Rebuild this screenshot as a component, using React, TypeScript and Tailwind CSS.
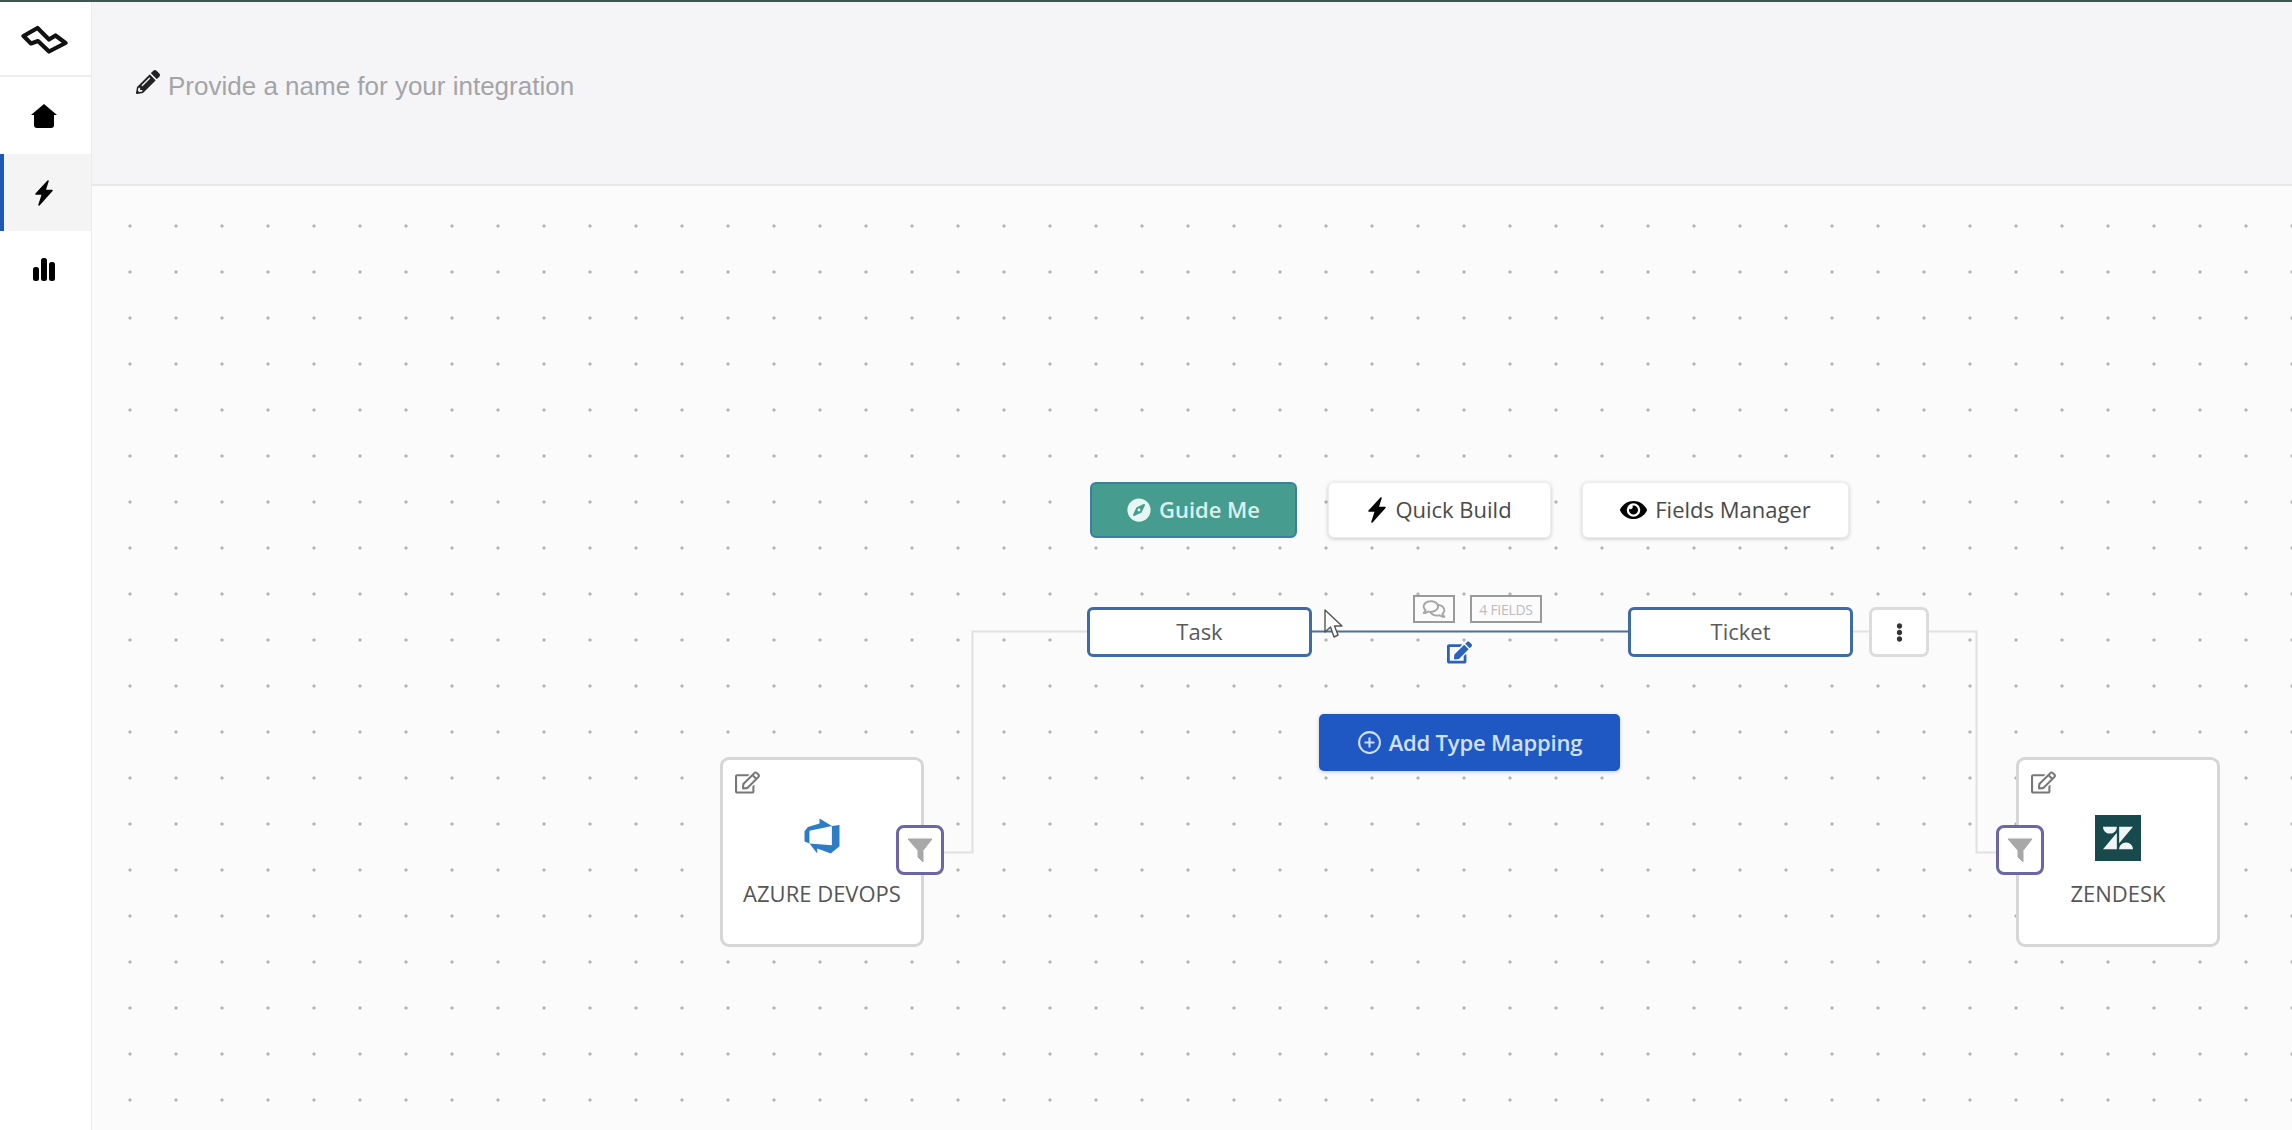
import type { ReactNode } from 'react';
import { FaCompass, FaEdit, FaEllipsisV, FaEye, FaPencilAlt, FaRegComments, FaRegEdit } from 'react-icons/fa';
import { FiPlusCircle } from 'react-icons/fi';
import { SiZendesk } from 'react-icons/si';
import { VscAzureDevops } from 'react-icons/vsc';

const UI_FONT = "font-['Open_Sans',sans-serif]";

const Logo = () => (
  <svg width="48" height="30" viewBox="0 0 48 30" fill="none" stroke="#111" strokeWidth="4.2" strokeLinejoin="round">
    <path d="M2.5 11 L16.5 3 L28 14.5 L34.5 10.5 L44.5 18 L28 26.5 L17 16 L10 18.5 Z" />
  </svg>
);

const HomeIcon = () => (
  <svg width="26" height="24" viewBox="0 0 26 24" fill="#000">
    <path d="M13 0 L26 11 L23 11 L23 21 Q23 24 20 24 L6 24 Q3 24 3 21 L3 11 L0 11 Z" />
  </svg>
);

const BoltIcon = ({ className }: { className: string }) => (
  <svg className={className} viewBox="0 0 20 26" fill="#000" stroke="#000" strokeWidth="1.5" strokeLinejoin="round">
    <path d="M14 1 L2 14 L8.5 14 L5 25 L18 10.5 L11 10.5 Z" />
  </svg>
);

const BarsIcon = () => (
  <svg width="22" height="23" viewBox="0 0 22 23" fill="#000">
    <rect x="0" y="9" width="6" height="14" rx="2.5" />
    <rect x="8" y="0" width="6" height="23" rx="2.5" />
    <rect x="16" y="4" width="6" height="19" rx="2.5" />
  </svg>
);

const FunnelIcon = () => (
  <svg width="26" height="26" viewBox="0 0 26 26" fill="#a8a8a8" stroke="#a8a8a8" strokeLinejoin="round">
    <path d="M1 2 L25 2 L16 13.5 L16 25 L11 20 L11 13.5 Z" />
  </svg>
);

const Cursor = () => (
  <svg width="20" height="31" viewBox="0 0 20 31" fill="#fff" stroke="#555" strokeWidth="1.4" strokeLinejoin="round">
    <path d="M1 1 L1 23 L6.5 18 L10 28 L14 26 L10.5 17 L18 17 Z" />
  </svg>
);

const navItems = [
  { key: 'home', icon: <HomeIcon />, active: false },
  { key: 'flows', icon: <BoltIcon className="h-[26px] w-[20px]" />, active: true },
  { key: 'reports', icon: <BarsIcon />, active: false },
];

const Sidebar = () => (
  <aside className="flex w-[92px] shrink-0 flex-col border-r border-[#ececee] bg-white">
    <div className="flex h-[75px] items-center justify-center border-b-2 border-[#ececec] pr-[2px] pt-[2px]">
      <Logo />
    </div>
    {navItems.map((item) => (
      <div
        key={item.key}
        className={`flex h-[77px] items-center justify-center pr-[4px] ${
          item.active ? 'border-l-[4px] border-[#1f57b8] bg-[#f4f4f5] pr-[8px]' : ''
        }`}
      >
        {item.icon}
      </div>
    ))}
  </aside>
);

const ActionButton = ({ className, children }: { className: string; children: ReactNode }) => (
  <button className={`absolute top-[296px] flex h-[56px] items-center justify-center gap-[8px] rounded-[6px] pb-[1px] text-[22px] ${className}`}>
    {children}
  </button>
);

const TypeBox = ({ label, className }: { label: string; className: string }) => (
  <div className={`absolute top-[421px] flex h-[50px] items-center justify-center rounded-[6px] border-[3px] border-[#3f6ba6] bg-white pb-[1px] text-[22px] text-[#5a5a5a] ${className}`}>
    {label}
  </div>
);

const FilterButton = ({ className }: { className: string }) => (
  <div className={`absolute top-[639px] flex h-[50px] w-[48px] items-center justify-center rounded-[8px] border-[3px] border-[#6c66a8] bg-white ${className}`}>
    <FunnelIcon />
  </div>
);

const SystemCard = ({ name, logo, className }: { name: string; logo: ReactNode; className: string }) => (
  <div className={`absolute top-[571px] h-[190px] w-[204px] rounded-[9px] border-[3px] border-[#d6d6d6] bg-white ${className}`}>
    <FaRegEdit className="absolute left-[12px] top-[10px] h-[25px] w-[25px] text-[#777]" />
    <div className="flex h-[101px] items-end justify-center">{logo}</div>
    <div className="mt-[18px] text-center text-[22px] leading-[28px] text-[#555]">{name}</div>
  </div>
);

const Canvas = () => (
  <div className={`relative flex-1 bg-[#fbfbfc] bg-[radial-gradient(circle,#b4b4b4_1.3px,transparent_1.9px)] bg-[size:46px_46px] bg-[position:15px_17px] ${UI_FONT}`}>
    <svg className="absolute inset-0 h-full w-full" fill="none">
      <path d="M995 445.5 H880.5 V666.5 H852" stroke="#e1e1e1" strokeWidth="2" />
      <path d="M1761 445.5 H1777 M1837 445.5 H1884.5 V666.5 H1904" stroke="#e1e1e1" strokeWidth="2" />
      <path d="M1220 445.5 H1536" stroke="#4f7098" strokeWidth="2" />
    </svg>

    <ActionButton className="left-[998px] w-[207px] border-2 border-[#3a7fa0] bg-[#469c8e] font-semibold text-[#d8f1ec]">
      <FaCompass className="h-[24px] w-[24px] text-[#e6f6f3]" />
      Guide Me
    </ActionButton>
    <ActionButton className="left-[1236px] w-[223px] border border-[#ededed] bg-white font-medium text-[#4a4a4a] shadow-[0_1px_4px_rgba(0,0,0,0.2)]">
      <BoltIcon className="h-[26px] w-[20px]" />
      Quick Build
    </ActionButton>
    <ActionButton className="left-[1490px] w-[267px] border border-[#ededed] bg-white font-medium text-[#4a4a4a] shadow-[0_1px_4px_rgba(0,0,0,0.2)]">
      <FaEye className="h-[24px] w-[27px] text-black" />
      Fields Manager
    </ActionButton>

    <TypeBox label="Task" className="left-[995px] w-[225px]" />
    <TypeBox label="Ticket" className="left-[1536px] w-[225px]" />
    <div className="absolute left-[1777px] top-[421px] flex h-[50px] w-[60px] items-center justify-center rounded-[7px] border-[3px] border-[#dcdcdc] bg-white">
      <FaEllipsisV className="h-[19px] w-[19px] text-[#333]" />
    </div>

    <div className="absolute left-[1321px] top-[409px] flex h-[28px] w-[42px] items-center justify-center border-2 border-[#9a9a9a] bg-[#fbfbfc]">
      <FaRegComments className="h-[20px] w-[24px] text-[#a5a5a5]" />
    </div>
    <div className="absolute left-[1378px] top-[409px] flex h-[28px] w-[72px] items-center justify-center border-2 border-[#9a9a9a] bg-[#fbfbfc] text-[14px] tracking-[-0.3px] text-[#bcbcbc]">
      4 FIELDS
    </div>
    <FaEdit className="absolute left-[1355px] top-[454px] h-[25px] w-[25px] text-[#2b62bd]" />

    <div className="absolute left-[1232px] top-[423px]">
      <Cursor />
    </div>

    <button className="absolute left-[1227px] top-[528px] flex h-[57px] w-[301px] items-center justify-center gap-[7px] rounded-[5px] bg-[#1f57c3] text-[22px] font-semibold tracking-[-0.2px] text-[#cfe0f8] shadow-[0_1px_4px_rgba(0,0,0,0.2)]">
      <FiPlusCircle className="h-[25px] w-[25px]" />
      Add Type Mapping
    </button>

    <SystemCard
      name="AZURE DEVOPS"
      className="left-[628px]"
      logo={<VscAzureDevops className="mb-[5px] h-[40px] w-[40px] text-[#2f7cc6]" />}
    />
    <FilterButton className="left-[804px]" />

    <SystemCard
      name="ZENDESK"
      className="left-[1924px]"
      logo={
        <div className="flex h-[46px] w-[46px] items-center justify-center bg-[#17494d]">
          <SiZendesk className="h-[30px] w-[30px] text-[#eef5f4]" />
        </div>
      }
    />
    <FilterButton className="left-[1904px]" />
  </div>
);

export default function App() {
  return (
    <div className="flex h-screen w-full flex-col overflow-hidden bg-white">
      <div className="h-[2px] shrink-0 bg-[#3f5650]" />
      <div className="flex min-h-0 flex-1">
        <Sidebar />
        <main className="flex min-w-0 flex-1 flex-col">
          <header className="flex h-[184px] shrink-0 items-start gap-[8px] border-b-2 border-[#e8e8ea] bg-[#f5f5f7] pl-[44px] pt-[68px]">
            <FaPencilAlt className="h-[24px] w-[24px] text-[#222]" />
            <span className="font-['Liberation_Sans',sans-serif] text-[26px] leading-[32px] text-[#a4a4a8]">
              Provide a name for your integration
            </span>
          </header>
          <Canvas />
        </main>
      </div>
    </div>
  );
}
